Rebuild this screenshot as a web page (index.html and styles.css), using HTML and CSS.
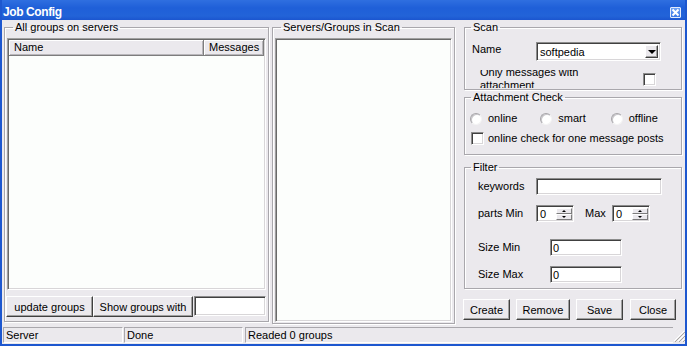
FILE: index.html
```html
<!DOCTYPE html>
<html lang="en">
  <head>
    <meta charset="utf-8">
    <title>Job Config</title>
    <link rel="stylesheet" href="styles.css">
  </head>
  <body>
    <div class="window">
      <div class="titlebar">
        <span class="title">Job Config</span>
        <span class="close-btn">
          <svg width="9" height="9" viewBox="0 0 9 9"><path d="M1.5 1.5 L7.5 7.5 M7.5 1.5 L1.5 7.5" stroke="#fff" stroke-width="2"/></svg>
        </span>
      </div>

      <div class="client">
        <div class="main">

          <!-- left: groups known on the servers -->
          <fieldset class="group group-all">
            <legend>All groups on servers</legend>
            <div class="listview">
              <div class="lv-header">
                <span class="col col-name">Name</span>
                <span class="col col-msg">Messages</span>
              </div>
            </div>
            <div class="group-actions">
              <button class="btn btn-update">update groups</button>
              <button class="btn btn-show">Show groups with</button>
              <input class="edit edit-show" type="text">
            </div>
          </fieldset>

          <!-- middle: what is in the scan -->
          <fieldset class="group group-inscan">
            <legend>Servers/Groups in Scan</legend>
            <div class="listbox"></div>
          </fieldset>

          <!-- right: scan settings -->
          <div class="side">
            <fieldset class="group group-scan">
              <legend>Scan</legend>
              <div class="row row-name">
                <span class="lbl lbl-name">Name</span>
                <div class="combo">
                  <span class="combo-text">softpedia</span>
                  <span class="combo-btn"><span class="arrow-down"></span></span>
                </div>
              </div>
              <div class="row-only">
                <span class="only-text">Only messages with attachment</span>
                <span class="check"></span>
              </div>
            </fieldset>

            <fieldset class="group group-attach">
              <legend>Attachment Check</legend>
              <div class="radios">
                <span class="radio-item"><span class="radio"></span>online</span>
                <span class="radio-item"><span class="radio"></span>smart</span>
                <span class="radio-item"><span class="radio"></span>offline</span>
              </div>
              <div class="row-check">
                <span class="check"></span>
                <span class="check-text">online check for one message posts</span>
              </div>
            </fieldset>

            <fieldset class="group group-filter">
              <legend>Filter</legend>
              <div class="frow frow-keywords">
                <span class="lbl lbl-short">keywords</span>
                <input class="edit edit-keywords" type="text">
              </div>
              <div class="frow frow-parts">
                <span class="lbl lbl-short">parts Min</span>
                <div class="spin">
                  <span class="spin-val">0</span>
                  <span class="spin-btns">
                    <span class="spin-btn"><span class="arrow-up-sm"></span></span>
                    <span class="spin-btn"><span class="arrow-down-sm"></span></span>
                  </span>
                </div>
                <span class="lbl lbl-max">Max</span>
                <div class="spin">
                  <span class="spin-val">0</span>
                  <span class="spin-btns">
                    <span class="spin-btn"><span class="arrow-up-sm"></span></span>
                    <span class="spin-btn"><span class="arrow-down-sm"></span></span>
                  </span>
                </div>
              </div>
              <div class="frow frow-sizemin">
                <span class="lbl lbl-long">Size Min</span>
                <input class="edit edit-size" type="text" value="0">
              </div>
              <div class="frow frow-sizemax">
                <span class="lbl lbl-long">Size Max</span>
                <input class="edit edit-size" type="text" value="0">
              </div>
            </fieldset>

            <div class="side-actions">
              <button class="btn btn-create">Create</button>
              <button class="btn btn-remove">Remove</button>
              <button class="btn btn-save">Save</button>
              <button class="btn btn-close">Close</button>
            </div>
          </div>
        </div>

        <div class="statusbar">
          <span class="panel panel-server">Server</span>
          <span class="panel panel-done">Done</span>
          <span class="panel panel-info">Readed 0 groups</span>
          <svg class="grip" width="12" height="12" viewBox="0 0 12 12">
            <path d="M11 1 L1 11 M11 5 L5 11 M11 9 L9 11" stroke="#fff" stroke-width="1"/>
            <path d="M12 1 L1 12 M12 5 L5 12 M12 9 L9 12" stroke="#a8a5a0" stroke-width="1" transform="translate(0.5 0.5)"/>
          </svg>
        </div>
      </div>
    </div>
  </body>
</html>
```

FILE: styles.css
```css
* {
  box-sizing: border-box;
}

body {
  margin: 0;
  font-family: "Liberation Sans", Arial, sans-serif;
  font-size: 11px;
  color: #000;
  background: #ebe9ed;
}

.window {
  width: 687px;
  height: 346px;
  border: 2px solid #1d57cf;
  border-top: none;
  background: #ebe9ed;
  overflow: hidden;
}

.titlebar {
  height: 20px;
  margin: 0 -2px;
  padding: 5px 0 0 3px;
  display: flex;
  justify-content: space-between;
  background: linear-gradient(#2f6fe0, #1f5fd8 40%, #2263d8 80%, #1b55cf);
}

.title {
  color: #fff;
  font-weight: bold;
  font-size: 12px;
  line-height: 14px;
  letter-spacing: -0.4px;
}

.close-btn {
  width: 11px;
  height: 11px;
  margin: 2px 6px 0 0;
  border: 1px solid #e3ebfb;
  border-radius: 1px;
  background: linear-gradient(#6fa3f6, #3b78e6);
  display: flex;
  align-items: center;
  justify-content: center;
}

.close-btn svg {
  display: block;
}

.client {
  height: 324px;
  display: flex;
  flex-direction: column;
}

.main {
  height: 304px;
  display: flex;
  padding-left: 2px;
}

/* group boxes */
.group {
  margin: 1px 0 0 0;
  padding: 0 2px;
  border: 1px solid #a9a7ac;
  box-shadow: inset 1px 1px #fff, 1px 1px #fff;
  min-width: 0;
}

.group legend {
  padding: 0 2px;
  margin-left: 6px;
  line-height: 13px;
}

.group-all {
  width: 265px;
  margin-bottom: 2px;
}

.group-inscan {
  width: 183px;
  margin-left: 3px;
}

.listview,
.listbox {
  background: #fcfefc;
  border: 1px solid;
  border-color: #a0a0a0 #fff #fff #a0a0a0;
  box-shadow: inset 1px 1px #696969, inset -1px -1px #d8d6d8;
}

.listview {
  width: 259px;
  height: 252px;
  margin-top: 4px;
  padding: 1px;
}

.lv-header {
  display: flex;
  height: 16px;
}

.col {
  height: 16px;
  line-height: 14px;
  padding-left: 5px;
  background: #ebe9ed;
  border-right: 1px solid #7d7d7d;
  border-bottom: 1px solid #7d7d7d;
  box-shadow: inset 1px 1px #fff, inset -1px -1px #b9b7bb;
}

.col-name {
  width: 195px;
}

.col-msg {
  flex: 1;
  padding-left: 5px;
}

.listbox {
  width: 177px;
  height: 284px;
  margin-top: 4px;
}

.group-actions {
  display: flex;
  margin: 6px 0 0 -1px;
}

.btn {
  height: 21px;
  padding: 0;
  font-family: "Liberation Sans", Arial, sans-serif;
  font-size: 11px;
  color: #000;
  background: #ebe9ed;
  border: 1px solid;
  border-color: #fff #404040 #404040 #fff;
  box-shadow: inset -1px -1px #a0a0a0;
}

.btn-update {
  width: 87px;
}

.btn-show {
  width: 100px;
}

.edit {
  height: 17px;
  padding: 0 0 0 2px;
  font-family: "Liberation Sans", Arial, sans-serif;
  font-size: 11px;
  background: #fff;
  border: 1px solid;
  border-color: #8c8c8c #fff #fff #8c8c8c;
  box-shadow: inset 1px 1px #404040, inset -1px -1px #d8d6d8;
  outline: none;
}

.edit-show {
  width: 72px;
  height: 20px;
  margin-left: 1px;
}

/* right column */
.side {
  width: 222px;
  margin-left: 8px;
  display: flex;
  flex-direction: column;
}

.side .group {
  margin-left: 1px;
  width: 218px;
  padding: 0;
}

.group-scan {
  height: 69px;
}

.group-attach {
  height: 64px;
}

.group-filter {
  height: 128px;
  margin-top: 6px;
}

.row-name {
  display: flex;
  align-items: flex-start;
  margin-top: 8px;
  padding-left: 7px;
}

.lbl {
  line-height: 13px;
}

.lbl-name {
  width: 64px;
  padding-top: 1px;
}

.combo {
  width: 125px;
  height: 19px;
  display: flex;
  align-items: center;
  justify-content: space-between;
  padding: 0 2px 0 3px;
  background: #fff;
  border: 1px solid;
  border-color: #8c8c8c #fff #fff #8c8c8c;
  box-shadow: inset 1px 1px #404040, inset -1px -1px #d8d6d8;
}

.combo-btn {
  width: 13px;
  height: 13px;
  display: flex;
  align-items: center;
  justify-content: center;
  background: #ebe9ed;
  border: 1px solid;
  border-color: #fff #404040 #404040 #fff;
  box-shadow: inset -1px -1px #a0a0a0;
}

.arrow-down {
  border-left: 4px solid transparent;
  border-right: 4px solid transparent;
  border-top: 4px solid #000;
  margin-top: 1px;
}

/* the original control is too short for its two lines, so both get cut */
.row-only {
  height: 18px;
  margin-top: 9px;
  padding-left: 15px;
  display: flex;
  align-items: center;
  justify-content: space-between;
  width: 191px;
  overflow: hidden;
}

.only-text {
  width: 140px;
  line-height: 13px;
}

.check {
  flex: none;
  width: 13px;
  height: 13px;
  background: #fff;
  border: 1px solid;
  border-color: #8c8c8c #fff #fff #8c8c8c;
  box-shadow: inset 1px 1px #404040, inset -1px -1px #d8d6d8;
}

.radios {
  display: flex;
  margin-top: 8px;
  padding-left: 5px;
}

.radio-item {
  width: 73px;
  display: flex;
  align-items: center;
  line-height: 13px;
}

.radio {
  width: 12px;
  height: 12px;
  margin-right: 6px;
  border-radius: 50%;
  background: #fff;
  border: 1px solid;
  border-color: #a6a4a8 #f4f4f4 #f4f4f4 #a6a4a8;
  box-shadow: inset 1px 1px #c8c6ca;
}

.row-check {
  display: flex;
  align-items: flex-start;
  margin-top: 7px;
  padding-left: 6px;
}

.check-text {
  margin-left: 4px;
  line-height: 13px;
  height: 12px;
  overflow: hidden;
}

.frow {
  display: flex;
  align-items: center;
  padding-left: 13px;
}

.frow-keywords {
  margin-top: 4px;
}

.frow-parts {
  margin-top: 10px;
}

.frow-sizemin {
  margin-top: 17px;
}

.frow-sizemax {
  margin-top: 10px;
}

.lbl-short {
  width: 58px;
}

.lbl-long {
  width: 72px;
}

.lbl-max {
  width: 38px;
  padding-left: 11px;
}

.edit-keywords {
  width: 126px;
}

.edit-size {
  width: 72px;
}

.spin {
  width: 38px;
  height: 17px;
  display: flex;
  justify-content: space-between;
  padding: 2px 1px 1px 3px;
  background: #fff;
  border: 1px solid;
  border-color: #8c8c8c #fff #fff #8c8c8c;
  box-shadow: inset 1px 1px #404040, inset -1px -1px #d8d6d8;
}

.spin-val {
  line-height: 13px;
}

.spin-btns {
  width: 16px;
  display: flex;
  flex-direction: column;
}

.spin-btn {
  flex: 1;
  display: flex;
  align-items: center;
  justify-content: center;
  background: #ebe9ed;
  border: 1px solid;
  border-color: #fff #7d7d7d #7d7d7d #fff;
}

.arrow-up-sm {
  border-left: 2px solid transparent;
  border-right: 2px solid transparent;
  border-bottom: 2px solid #000;
}

.arrow-down-sm {
  border-left: 2px solid transparent;
  border-right: 2px solid transparent;
  border-top: 2px solid #000;
}

.side-actions {
  display: flex;
  gap: 6px;
  margin-top: 10px;
}

.btn-create {
  width: 47px;
}

.btn-remove {
  width: 54px;
}

.btn-save {
  width: 47px;
  margin-left: 0;
}

.btn-close {
  width: 46px;
  margin-left: 1px;
}

/* status bar */
.statusbar {
  height: 20px;
  display: flex;
  align-items: flex-end;
  padding: 2px 0 1px 1px;
}

.panel {
  height: 16px;
  line-height: 14px;
  padding-left: 2px;
  border: 1px solid;
  border-color: #a9a7ac #fff #fff #a9a7ac;
}

.panel-server {
  width: 120px;
}

.panel-done {
  width: 119px;
  margin-left: 1px;
}

.panel-info {
  flex: 1;
  margin-left: 2px;
  border-right: none;
}

.grip {
  display: block;
  margin-bottom: 1px;
}
```
